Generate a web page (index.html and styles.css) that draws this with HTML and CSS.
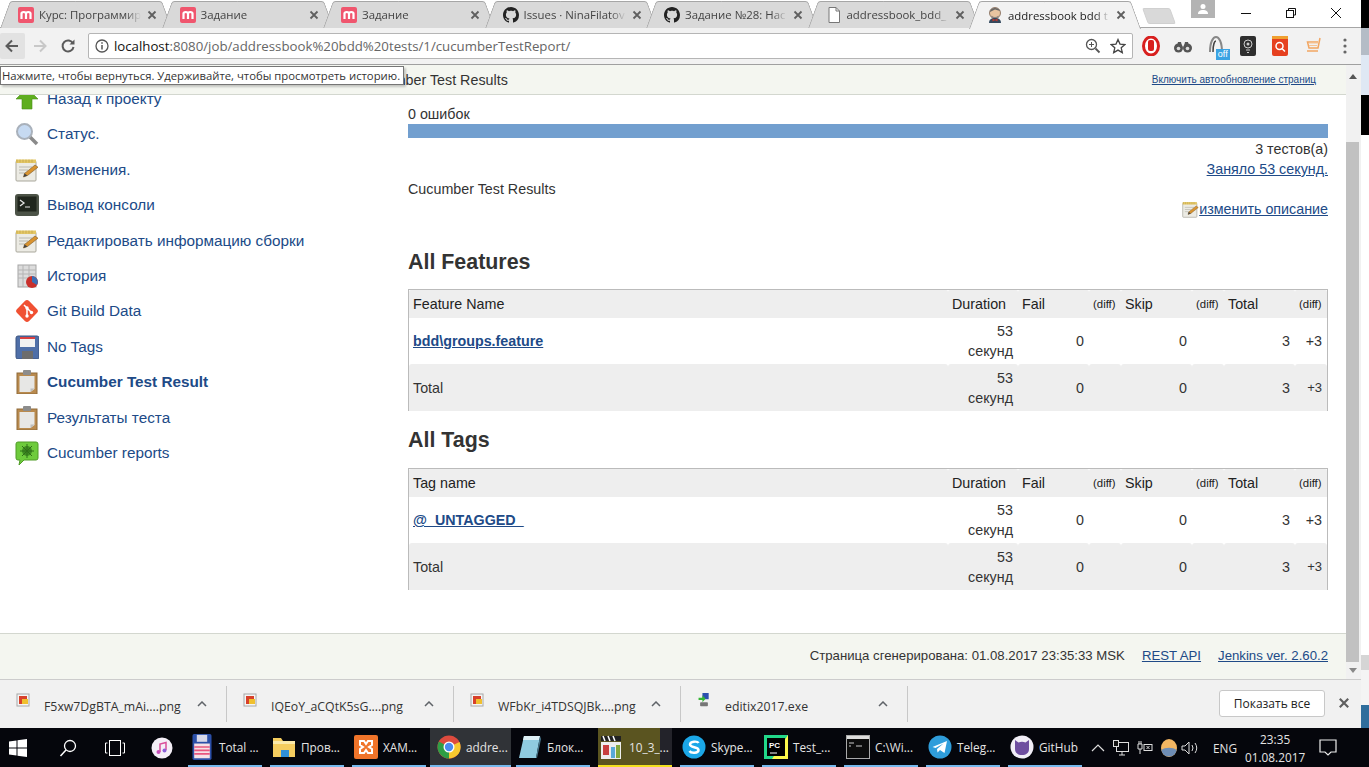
FILE: index.html
```html
<!DOCTYPE html>
<html lang="ru">
<head>
<meta charset="UTF-8" />
<title>Cucumber Test Results</title>
<link rel="stylesheet" href="styles.css">
</head>
<body>

<svg class="defs" width="0" height="0">
  <symbol id="i-moodle" viewBox="0 0 16 16">
    <rect width="16" height="16" rx="2" fill="#f0566e"/>
    <path d="M3.5 12V6.5C3.5 4.5 8 4.5 8 6.5V12M8 6.5C8 4.5 12.5 4.5 12.5 6.5V12" fill="none" stroke="#fff" stroke-width="2.2"/>
  </symbol>
  <symbol id="i-github" viewBox="0 0 16 16">
    <path fill="#222" d="M8 0C3.58 0 0 3.58 0 8c0 3.54 2.29 6.53 5.47 7.59.4.07.55-.17.55-.38 0-.19-.01-.82-.01-1.49-2.01.37-2.53-.49-2.69-.94-.09-.23-.48-.94-.82-1.13-.28-.15-.68-.52-.01-.53.63-.01 1.08.58 1.23.82.72 1.21 1.87.87 2.33.66.07-.52.28-.87.51-1.07-1.78-.2-3.64-.89-3.64-3.95 0-.87.31-1.59.82-2.15-.08-.2-.36-1.02.08-2.12 0 0 .67-.21 2.2.82.64-.18 1.32-.27 2-.27.68 0 1.36.09 2 .27 1.53-1.04 2.2-.82 2.2-.82.44 1.1.16 1.92.08 2.12.51.56.82 1.27.82 2.15 0 3.07-1.87 3.75-3.65 3.95.29.25.54.73.54 1.48 0 1.07-.01 1.93-.01 2.2 0 .21.15.46.55.38A8.013 8.013 0 0016 8c0-4.42-3.58-8-8-8z"/>
  </symbol>
  <symbol id="i-notepad" viewBox="0 0 24 24">
    <rect x="1" y="3" width="20" height="20" rx="1" fill="#ecebe4" stroke="#a9a79c"/>
    <rect x="1" y="1.500" width="20" height="3.500" fill="#e3c766"/>
    <path d="M2 1.500v3M5 1.500v3M8 1.500v3M11 1.500v3M14 1.500v3M17 1.500v3" stroke="#b99c45" stroke-width=".6"/>
    <path d="M4 9h13M4 12h9M4 15h7" stroke="#b9b9b0"/>
    <path d="M8.500 19l1-3.500L20 7l3 2.200L12.500 17.500z" fill="#d9932f" stroke="#7c5a2a" stroke-width=".6"/>
    <path d="M8.500 19l1-3.500 3 2z" fill="#444"/>
  </symbol>
  <symbol id="i-clipboard" viewBox="0 0 24 24">
    <rect x="2" y="3" width="20" height="21" fill="#b98a4e" stroke="#8f6a38"/>
    <path d="M4.5 6h15v13l-4 3h-11z" fill="#e7e7e5"/>
    <path d="M15.5 22v-3.500h4z" fill="#bdbdbb"/>
    <rect x="8" y="0" width="8" height="5" rx="1" fill="#8c8c8c"/>
  </symbol>
  <symbol id="i-file" viewBox="0 0 14 14">
    <rect x="1" y="1" width="12" height="12" fill="#f5f5f5" stroke="#a8a8a8"/>
    <rect x="3" y="3" width="8" height="8" fill="#d8402a"/>
    <rect x="6" y="6" width="6" height="5" fill="#f0c02e"/>
  </symbol>
  <symbol id="i-up" viewBox="0 0 10 6">
    <path d="M1 5l4-4 4 4" fill="none" stroke="#5f6368" stroke-width="1.500"/>
  </symbol>
  <symbol id="i-close" viewBox="0 0 10 10">
    <path d="M1.500 1.500l7 7M8.500 1.500l-7 7" stroke="#5f5f5f" stroke-width="1.800"/>
  </symbol>
</svg>

<div class="screen">
  <div class="window">

    <div class="tabbar">
      <div class="tab"><svg class="fav"><use href="#i-moodle"/></svg><span class="tab-title">Курс: Программир</span><svg class="tab-x"><use href="#i-close"/></svg></div>
      <div class="tab"><svg class="fav"><use href="#i-moodle"/></svg><span class="tab-title">Задание</span><svg class="tab-x"><use href="#i-close"/></svg></div>
      <div class="tab"><svg class="fav"><use href="#i-moodle"/></svg><span class="tab-title">Задание</span><svg class="tab-x"><use href="#i-close"/></svg></div>
      <div class="tab"><svg class="fav"><use href="#i-github"/></svg><span class="tab-title">Issues · NinaFilatov</span><svg class="tab-x"><use href="#i-close"/></svg></div>
      <div class="tab"><svg class="fav"><use href="#i-github"/></svg><span class="tab-title">Задание №28: Нас</span><svg class="tab-x"><use href="#i-close"/></svg></div>
      <div class="tab">
        <svg class="fav" viewBox="0 0 16 16"><path d="M3 .5h7l3.500 3.500v11.500H3z" fill="#fff" stroke="#777"/><path d="M10 .5v3.500h3.500" fill="none" stroke="#777"/></svg>
        <span class="tab-title">addressbook_bdd_</span><svg class="tab-x"><use href="#i-close"/></svg>
      </div>
      <div class="tab active">
        <svg class="fav" viewBox="0 0 16 16">
          <circle cx="8" cy="6" r="5.500" fill="#e8c4a0" stroke="#6b5140" stroke-width=".7"/>
          <path d="M3 5C3 0 12 -.5 13 4L8 2.500z" fill="#6a6866"/>
          <path d="M4.500 8.500q3.500 3 7 0v2q-3.500 2-7 0z" fill="#8a8480"/>
          <path d="M2 16c0-4 3-5 6-5s6 1 6 5z" fill="#34495e"/>
          <path d="M5.500 11.500l2.500 1.200 2.500-1.200v3l-2.500-1.300-2.500 1.300z" fill="#c0392b"/>
        </svg>
        <span class="tab-title">addressbook bdd t</span><svg class="tab-x"><use href="#i-close"/></svg>
      </div>
      <div class="newtab"></div>
      <div class="user-btn">
        <svg width="12" height="12" viewBox="0 0 12 12"><circle cx="6" cy="3.500" r="2.500" fill="#fff"/><path d="M1 11c0-3 2-4 5-4s5 1 5 4z" fill="#fff"/></svg>
      </div>
      <div class="win-controls">
        <svg width="12" height="12" viewBox="0 0 12 12"><path d="M1 6.500h10" stroke="#111"/></svg>
        <svg width="12" height="12" viewBox="0 0 12 12"><path d="M3.500 3V1.500h7V8H9" fill="none" stroke="#111"/><rect x="1.500" y="3.500" width="7" height="7" fill="none" stroke="#111"/></svg>
        <svg width="12" height="12" viewBox="0 0 12 12"><path d="M1 1l10 10M11 1L1 11" stroke="#111"/></svg>
      </div>
    </div>

    <div class="toolbar">
      <div class="nav-btn hover">
        <svg width="16" height="16" viewBox="0 0 16 16"><path d="M14 8H3M8 2.500L2.500 8 8 13.500" fill="none" stroke="#5a5a5a" stroke-width="2"/></svg>
      </div>
      <div class="nav-btn">
        <svg width="16" height="16" viewBox="0 0 16 16"><path d="M2 8h11M8 2.500L13.500 8 8 13.500" fill="none" stroke="#c8c8c8" stroke-width="2"/></svg>
      </div>
      <div class="nav-btn">
        <svg width="16" height="16" viewBox="0 0 16 16"><path d="M13 5.500A5.500 5.500 0 1 0 13.500 9" fill="none" stroke="#5a5a5a" stroke-width="2"/><path d="M14.500 1.500v5h-5z" fill="#5a5a5a"/></svg>
      </div>
      <div class="omnibox">
        <svg width="14" height="14" viewBox="0 0 14 14"><circle cx="7" cy="7" r="6" fill="none" stroke="#555" stroke-width="1.300"/><path d="M7 6v4.500M7 3.300v1.500" stroke="#555" stroke-width="1.500"/></svg>
        <span class="url"><b>localhost</b>:8080/job/addressbook%20bdd%20tests/1/cucumberTestReport/</span>
        <svg class="omni-zoom" width="16" height="16" viewBox="0 0 16 16"><circle cx="6.500" cy="6.500" r="5" fill="none" stroke="#555" stroke-width="1.300"/><path d="M10.500 10.500l4 4" stroke="#555" stroke-width="1.800"/><path d="M4 6.500h5M6.500 4v5" stroke="#555"/></svg>
        <svg width="16" height="16" viewBox="0 0 16 16"><path d="M8 1.500l2 4.600 4.900.5-3.700 3.200 1.100 4.800L8 12.100l-4.300 2.500 1.100-4.800L1.100 6.600 6 6.100z" fill="none" stroke="#444" stroke-width="1.300"/></svg>
      </div>
      <div class="ext-row">
        <svg width="18" height="20" viewBox="0 0 18 20"><ellipse cx="9" cy="10" rx="7.500" ry="9" fill="#fff" stroke="#d8201f" stroke-width="3"/><rect x="6" y="4" width="6" height="11" rx="2" fill="#d8201f"/></svg>
        <svg width="18" height="14" viewBox="0 0 18 14"><circle cx="4.500" cy="9" r="4.500" fill="#555"/><circle cx="13.500" cy="9" r="4.500" fill="#555"/><circle cx="4.500" cy="9.500" r="1.800" fill="#ddd"/><circle cx="13.500" cy="9.500" r="1.800" fill="#ddd"/><path d="M4 3h3l1 4h2l1-4h3l1 4H3z" fill="#555"/></svg>
        <div class="ext-off">
          <svg width="16" height="20" viewBox="0 0 16 20"><path d="M2 16C2 6 5 1 8 1s6 5 6 15" fill="none" stroke="#888" stroke-width="2"/><path d="M5 16C5 9 6.500 5 8 5" fill="none" stroke="#444" stroke-width="1.500"/></svg>
          <span class="off-badge">off</span>
        </div>
        <svg width="16" height="20" viewBox="0 0 16 20"><rect width="16" height="20" rx="2" fill="#2f2f2f"/><circle cx="8" cy="8" r="4" fill="none" stroke="#ccc"/><circle cx="8" cy="8" r="1.500" fill="#ccc"/><path d="M6 14h4M7 16.500h2" stroke="#ccc"/></svg>
        <svg width="16" height="20" viewBox="0 0 16 20"><rect width="16" height="20" rx="2" fill="#e6401f"/><rect width="16" height="3" fill="#f0a030"/><circle cx="7.500" cy="10" r="3.500" fill="none" stroke="#fff" stroke-width="1.500"/><path d="M10 12.500l3 3" stroke="#fff" stroke-width="1.500"/></svg>
        <svg width="16" height="18" viewBox="0 0 16 18"><path d="M15 1l-2 10H4L2.500 5H13" fill="none" stroke="#f2a662" stroke-width="1.500"/><path d="M4 6h9M4 8.500h8" stroke="#f6c496"/><path d="M2 14h11" stroke="#f2a662" stroke-width="1.500"/></svg>
        <svg width="4" height="16" viewBox="0 0 4 16"><circle cx="2" cy="2" r="1.600" fill="#666"/><circle cx="2" cy="8" r="1.600" fill="#666"/><circle cx="2" cy="14" r="1.600" fill="#666"/></svg>
      </div>
    </div>

    <div class="viewport">
      <div class="page">
        <div class="crumbs">
          <a class="crumb-1">Jenkins</a>
          <a class="crumb-2">addressbook bdd tests</a>
          <a class="crumb-3">#1</a>
          <a class="crumb-4">Cucumber Test Results</a>
          <a class="autorefresh">Включить автообновление страниц</a>
        </div>

        <div class="columns">
          <ul class="side">
            <li>
              <svg class="ico" viewBox="0 0 24 24"><path d="M12 1L23 12h-6v10H7V12H1z" fill="#5fae1f" stroke="#4a8f17" stroke-width=".6"/></svg>
              <a>Назад к проекту</a>
            </li>
            <li>
              <svg class="ico" viewBox="0 0 24 24"><path d="M15 15l7 7" stroke="#8a8a8a" stroke-width="3.500"/><circle cx="9.500" cy="9.500" r="7.500" fill="#c6daf2" stroke="#a9b1bb" stroke-width="2"/></svg>
              <a>Статус.</a>
            </li>
            <li><svg class="ico"><use href="#i-notepad"/></svg><a>Изменения.</a></li>
            <li>
              <svg class="ico" viewBox="0 0 24 24"><rect x="0" y="1" width="24" height="22" rx="3" fill="#4c5347"/><rect x="2.500" y="3.500" width="19" height="15" fill="#20261d"/><path d="M5 7l4 3-4 3" fill="none" stroke="#e5e5e5" stroke-width="1.300"/><path d="M10 14h5" stroke="#e5e5e5"/></svg>
              <a>Вывод консоли</a>
            </li>
            <li><svg class="ico"><use href="#i-notepad"/></svg><a>Редактировать информацию сборки</a></li>
            <li>
              <svg class="ico" viewBox="0 0 24 24"><rect x="3" y="1" width="18" height="22" fill="#dcdcdc" stroke="#a5a5a5"/><path d="M3 6h18M3 10h18M3 14h18M8 1v22M14 1v22" stroke="#b4b4b4"/><circle cx="17" cy="18" r="6" fill="#c9302c"/><path d="M17 18v-6a6 6 0 0 1 5 9z" fill="#3b6fb5"/></svg>
              <a>История</a>
            </li>
            <li>
              <svg class="ico" viewBox="0 0 24 24"><rect x="4.500" y="4.500" width="15" height="15" rx="2" transform="rotate(45 12 12)" fill="#f05133" stroke="#f05133" stroke-width="2"/><path d="M9 6l7 7M12 9v7" stroke="#fff" stroke-width="1.500"/><circle cx="12" cy="9" r="1.700" fill="#fff"/><circle cx="12" cy="17" r="1.700" fill="#fff"/><circle cx="16.500" cy="13.500" r="1.700" fill="#fff"/></svg>
              <a>Git Build Data</a>
            </li>
            <li>
              <svg class="ico" viewBox="0 0 24 24"><rect x="1" y="1" width="23" height="23" rx="2" fill="#4f6fa8" stroke="#3d5480"/><rect x="5" y="2" width="15" height="10" fill="#f2f2f2"/><rect x="5" y="2" width="15" height="2" fill="#d94040"/><rect x="7" y="16" width="11" height="8" fill="#6d6d6d"/></svg>
              <a>No Tags</a>
            </li>
            <li class="current"><svg class="ico"><use href="#i-clipboard"/></svg><a>Cucumber Test Result</a></li>
            <li><svg class="ico"><use href="#i-clipboard"/></svg><a>Результаты теста</a></li>
            <li>
              <svg class="ico" viewBox="0 0 24 24"><path d="M3 1h18q2 0 2 2v14q0 2-2 2H9l-5 5 1-5H3q-2 0-2-2V3q0-2 2-2z" fill="#6ecb3c" stroke="#4f9c26"/><circle cx="12" cy="10" r="5" fill="#3f8c22"/><path d="M12 3v14M5 10h14M7 5l10 10M17 5L7 15" stroke="#2f6e18"/></svg>
              <a>Cucumber reports</a>
            </li>
          </ul>

          <div class="main">
            <div>0 ошибок</div>
            <div class="bar"></div>
            <div class="right">3 тестов(а)</div>
            <div class="right"><a>Заняло 53 секунд.</a></div>
            <div>Cucumber Test Results</div>
            <div class="right edit">
              <svg class="ico-small"><use href="#i-notepad"/></svg><a>изменить описание</a>
            </div>

            <h2 class="first">All Features</h2>
            <table class="report">
              <colgroup><col class="c-name"><col class="c-dur"><col class="c-num"><col class="c-diff"><col class="c-num"><col class="c-diff"><col class="c-num"><col class="c-diff"></colgroup>
              <tr><th>Feature Name</th><th>Duration</th><th>Fail</th><th class="diff">(diff)</th><th>Skip</th><th class="diff">(diff)</th><th>Total</th><th class="diff">(diff)</th></tr>
              <tr><td><a class="strong">bdd\groups.feature</a></td><td class="num">53 секунд</td><td class="num">0</td><td></td><td class="num">0</td><td></td><td class="num">3</td><td class="num">+3</td></tr>
              <tr class="total"><td>Total</td><td class="num">53 секунд</td><td class="num">0</td><td></td><td class="num">0</td><td></td><td class="num">3</td><td class="num small">+3</td></tr>
            </table>

            <h2>All Tags</h2>
            <table class="report">
              <colgroup><col class="c-name"><col class="c-dur"><col class="c-num"><col class="c-diff"><col class="c-num"><col class="c-diff"><col class="c-num"><col class="c-diff"></colgroup>
              <tr><th>Tag name</th><th>Duration</th><th>Fail</th><th class="diff">(diff)</th><th>Skip</th><th class="diff">(diff)</th><th>Total</th><th class="diff">(diff)</th></tr>
              <tr><td><a class="strong">@_UNTAGGED_</a></td><td class="num">53 секунд</td><td class="num">0</td><td></td><td class="num">0</td><td></td><td class="num">3</td><td class="num">+3</td></tr>
              <tr class="total"><td>Total</td><td class="num">53 секунд</td><td class="num">0</td><td></td><td class="num">0</td><td></td><td class="num">3</td><td class="num small">+3</td></tr>
            </table>
          </div>
        </div>

        <footer class="foot">
          <span>Страница сгенерирована: 01.08.2017 23:35:33 MSK</span>
          <a>REST API</a>
          <a>Jenkins ver. 2.60.2</a>
        </footer>
      </div>

      <div class="scrollbar">
        <span class="arrow-up"></span>
        <span class="thumb"></span>
        <span class="arrow-down"></span>
      </div>
    </div>

    <div class="downloads">
      <div class="dl"><svg class="dl-ico"><use href="#i-file"/></svg><span class="dl-name">F5xw7DgBTA_mAi....png</span><svg class="dl-up"><use href="#i-up"/></svg></div>
      <div class="dl"><svg class="dl-ico"><use href="#i-file"/></svg><span class="dl-name">IQEoY_aCQtK5sG....png</span><svg class="dl-up"><use href="#i-up"/></svg></div>
      <div class="dl"><svg class="dl-ico"><use href="#i-file"/></svg><span class="dl-name">WFbKr_i4TDSQJBk....png</span><svg class="dl-up"><use href="#i-up"/></svg></div>
      <div class="dl">
        <svg class="dl-ico" viewBox="0 0 16 18"><rect x="6" y="0" width="8" height="8" fill="#2c4fb0"/><path d="M1 6h5V3l4 4.500L6 12V9H1z" fill="#35b534"/><rect x="3" y="12" width="10" height="5" rx="1" fill="#777"/></svg>
        <span class="dl-name">editix2017.exe</span><svg class="dl-up"><use href="#i-up"/></svg>
      </div>
      <button class="show-all">Показать все</button>
      <svg class="dl-close"><use href="#i-close"/></svg>
    </div>

    <div class="tooltip">Нажмите, чтобы вернуться. Удерживайте, чтобы просмотреть историю.</div>
  </div>

  <div class="strip"></div>
</div>

<div class="taskbar">
  <div class="sys">
    <svg width="18" height="18" viewBox="0 0 18 18"><path d="M0 2.500l7.500-1v7H0zM8.500 1.300L18 0v8.500H8.500zM0 9.500h7.500v7L0 15.500zM8.500 9.500H18V18l-9.500-1.300z" fill="#fff"/></svg>
  </div>
  <div class="sys">
    <svg width="18" height="18" viewBox="0 0 18 18"><circle cx="11" cy="7" r="5.500" fill="none" stroke="#fff" stroke-width="1.300"/><path d="M7 11l-5.500 6" stroke="#fff" stroke-width="1.500"/></svg>
  </div>
  <div class="sys">
    <svg width="20" height="16" viewBox="0 0 20 16"><rect x="4.500" y=".5" width="11" height="15" fill="none" stroke="#fff"/><path d="M2.500 3H.5v10h2M17.500 3h2v10h-2" fill="none" stroke="#fff"/></svg>
  </div>
  <div class="sys sys-last">
    <svg width="22" height="22" viewBox="0 0 22 22"><circle cx="11" cy="11" r="10.500" fill="#f4eef7"/><path d="M9 15V7l6-1.500V13" fill="none" stroke="#d94f9a" stroke-width="1.500"/><circle cx="7.500" cy="15" r="2" fill="#c84fbb"/><circle cx="13.500" cy="13.500" r="2" fill="#8a5fd8"/></svg>
  </div>

  <div class="task">
    <svg class="task-ico" viewBox="0 0 22 30"><rect width="22" height="30" rx="2" fill="#2b4fa8"/><rect x="5" y="1" width="12" height="8" fill="#d8d8e8"/><rect x="2" y="11" width="18" height="17" fill="#f6e0e6"/><path d="M2 15h18M2 19h18M2 23h18" stroke="#e8557f" stroke-width="2"/></svg>
    <span>Total ...</span>
  </div>
  <div class="task">
    <svg class="task-ico" viewBox="0 0 24 24"><path d="M1 3h8l2 3h12v16H1z" fill="#f5cd5f"/><rect x="1" y="6" width="22" height="3" fill="#fbe9a8"/><rect x="9" y="15" width="8" height="7" fill="#2f8fd8"/></svg>
    <span>Пров...</span>
  </div>
  <div class="task">
    <svg class="task-ico" viewBox="0 0 24 24"><rect width="24" height="24" rx="2" fill="#f0742a"/><path d="M6 6h4l2 3 2-3h4v4l-3 2 3 2v4h-4l-2-3-2 3H6v-4l3-2-3-2z" fill="none" stroke="#fff" stroke-width="2"/></svg>
    <span>XAM...</span>
  </div>
  <div class="task active">
    <svg class="task-ico" viewBox="0 0 24 24"><circle cx="12" cy="12" r="11.500" fill="#dd4b3e"/><path d="M12 12L22.500 7A11.500 11.500 0 0 1 12 23.500z" fill="#f7c92e"/><path d="M12 12L1.900 6.500A11.500 11.500 0 0 0 12 23.500z" fill="#2f9e45"/><circle cx="12" cy="12" r="5.500" fill="#fff"/><circle cx="12" cy="12" r="4.200" fill="#4a8bf0"/></svg>
    <span>addre...</span>
  </div>
  <div class="task">
    <svg class="task-ico" viewBox="0 0 24 26"><path d="M6 2h16l-4 22H1z" fill="#8fcbe0"/><path d="M6 2h16l-1 4H5z" fill="#dff1f7"/><path d="M18 24l4-22 1 3-4 19z" fill="#47768c"/></svg>
    <span>Блок...</span>
  </div>
  <div class="task video">
    <svg class="task-ico" viewBox="0 0 24 26"><rect x="1" y="2" width="20" height="5" fill="#222"/><path d="M3 2l2 5M8 2l2 5M13 2l2 5" stroke="#fff" stroke-width="1.500"/><rect x="1" y="8" width="20" height="17" fill="#eee"/><rect x="3" y="11" width="6" height="10" fill="#c83f3f"/><rect x="11" y="13" width="4" height="11" fill="#5aa9d8"/><rect x="16" y="11" width="4" height="13" fill="#85a83c"/></svg>
    <span>10_3_...</span>
  </div>
  <div class="task">
    <svg class="task-ico" viewBox="0 0 24 24"><circle cx="12" cy="12" r="11.500" fill="#1ba7e8"/><path d="M16.500 8C15.500 6 8 6 8 9.500s8.500 2 8.500 5.500S9 18.500 7.500 16" fill="none" stroke="#fff" stroke-width="2.500"/></svg>
    <span>Skype...</span>
  </div>
  <div class="task">
    <svg class="task-ico" viewBox="0 0 24 24"><rect width="24" height="24" fill="#21d789"/><path d="M24 0v24H8z" fill="#fcf84a"/><rect x="3" y="3" width="18" height="18" fill="#000"/><path d="M6 18h7" stroke="#fff"/><text x="5" y="13" class="pc-text">PC</text></svg>
    <span>Test_...</span>
  </div>
  <div class="task">
    <svg class="task-ico" viewBox="0 0 24 24"><rect x=".5" y=".5" width="23" height="23" fill="#0c0c0c" stroke="#aaa"/><rect x="1" y="1" width="22" height="3" fill="#ddd"/><path d="M3 8h5M3 11h2M10 11h6" stroke="#ccc"/></svg>
    <span>C:\Wi...</span>
  </div>
  <div class="task">
    <svg class="task-ico" viewBox="0 0 24 24"><circle cx="12" cy="12" r="11.500" fill="#2f9ddb"/><path d="M4.500 12L19 6l-2.500 12-4.500-3-2.500 2.500L9 14l6.500-5.500L7.500 13z" fill="#fff"/></svg>
    <span>Teleg...</span>
  </div>
  <div class="task">
    <svg class="task-ico" viewBox="0 0 24 24"><circle cx="12" cy="12" r="11.500" fill="#f1eef7"/><path d="M5 5l3.500 2.500a9 9 0 0 1 7 0L19 5v9c0 4-3 6-7 6s-7-2-7-6z" fill="#6e4ea0"/></svg>
    <span>GitHub</span>
  </div>

  <div class="tray">
    <svg width="14" height="8" viewBox="0 0 14 8"><path d="M1 7l6-6 6 6" fill="none" stroke="#ddd" stroke-width="1.200"/></svg>
    <svg width="16" height="16" viewBox="0 0 16 16"><rect x="3.500" y="2.500" width="12" height="9" fill="none" stroke="#ddd"/><path d="M9 12v3M6 15h6" stroke="#ddd"/><rect x=".5" y=".5" width="5" height="6" fill="#111" stroke="#ddd"/></svg>
    <svg width="16" height="14" viewBox="0 0 16 14"><path d="M1 3h4v5H1zM2 3V0M4 3V0M3 8v5" fill="none" stroke="#ddd"/><rect x="7" y="3.500" width="8" height="6" fill="none" stroke="#ddd"/><path d="M9.500 5l3 3M12.500 5l-3 3" stroke="#ddd"/></svg>
    <svg width="16" height="18" viewBox="0 0 16 18"><ellipse cx="8" cy="9" rx="8" ry="9" fill="#f3b662"/><path d="M.3 11C4 8 12 8 15.700 11A8 9 0 0 1 .3 11z" fill="#6e8db5"/></svg>
    <svg class="tray-sound" width="18" height="14" viewBox="0 0 18 14"><path d="M1 5h3l4-4v12l-4-4H1z" fill="none" stroke="#ddd"/><path d="M11 4q2 3 0 6M14 2q3.500 5 0 10" fill="none" stroke="#ddd"/></svg>
    <span class="lang">ENG</span>
    <div class="clock"><span>23:35</span><span>01.08.2017</span></div>
    <svg class="notify" width="18" height="18" viewBox="0 0 18 18"><path d="M1 1h16v12h-5l-3 3-3-3H1z" fill="none" stroke="#eee" stroke-width="1.200"/></svg>
  </div>
</div>

</body>
</html>
```

FILE: styles.css
```css
* {
  box-sizing: border-box;
}
html, body {
  margin: 0;
  height: 767px;
  overflow: hidden;
}
body {
  font-family: "Liberation Sans", Arial, sans-serif;
  font-size: 14.3px;
  color: #333;
  background: #000;
}
.defs {
  position: absolute;
}
a {
  color: #204a87;
  text-decoration: underline;
}

.screen {
  display: flex;
  height: 728px;
}
.window {
  position: relative;
  width: 1361px;
  display: flex;
  flex-direction: column;
  background: #fff;
}
.strip {
  flex: 1;
  background: linear-gradient(#000 0 28px, #b4bcc6 28px 55px, #dfe8f4 55px 95px, #000 95px 135px, #fff 135px 655px, #d5d5d5 655px 670px, #f4f4f4 670px 705px, #2f6d9c 705px);
}

/* Tabs */
.tabbar {
  height: 28px;
  flex: none;
  display: flex;
  background: #fff;
  border-bottom: 1px solid #a6a6a6;
  font-family: "Open Sans", sans-serif;
  font-size: 11.4px;
}
.tab {
  position: relative;
  isolation: isolate;
  width: 172px;
  height: 27px;
  margin-top: 1px;
  margin-right: -10.5px;
  padding: 0 15px 0 18px;
  display: flex;
  align-items: center;
  flex: none;
  color: #444;
}
.tab::before, .tab::after {
  content: "";
  position: absolute;
  z-index: -1;
  top: 0;
  bottom: 0;
  width: 50%;
  background: #d9d9d9;
  border-top: 1px solid #a6a6a6;
}
.tab::before {
  left: 5px;
  border-left: 1px solid #a6a6a6;
  transform: skewX(-20deg);
  border-top-left-radius: 3px;
}
.tab::after {
  right: 5px;
  border-right: 1px solid #a6a6a6;
  transform: skewX(20deg);
  border-top-right-radius: 3px;
}
.tab.active {
  z-index: 2;
  height: 28px;
  color: #222;
}
.tab.active::before, .tab.active::after {
  background: #f2f2f2;
}
.fav {
  width: 16px;
  height: 16px;
  flex: none;
  margin-right: 5px;
}
.tab-title {
  flex: 1;
  overflow: hidden;
  white-space: nowrap;
  -webkit-mask-image: linear-gradient(to right, #000 85%, transparent);
  mask-image: linear-gradient(to right, #000 85%, transparent);
}
.tab-x {
  width: 10px;
  height: 10px;
  margin-left: 6px;
  flex: none;
}
.newtab {
  width: 28px;
  height: 16px;
  margin: 8px 0 0 14px;
  flex: none;
  background: #d9d9d9;
  border: 1px solid #d0d0d0;
  border-radius: 2px;
  transform: skewX(20deg);
}
.user-btn {
  width: 24px;
  height: 18px;
  margin-left: 18px;
  flex: none;
  display: flex;
  align-items: center;
  justify-content: center;
  background: #b3b3b3;
}
.win-controls {
  margin-left: 25px;
  height: 26px;
  display: flex;
  align-items: center;
  gap: 33px;
}

/* Toolbar */
.toolbar {
  height: 37px;
  flex: none;
  display: flex;
  align-items: center;
  padding: 0 0 1px 0;
  background: #f2f2f2;
  border-bottom: 1px solid #a0a0a0;
}
.nav-btn {
  width: 25px;
  height: 26px;
  margin-right: 3px;
  display: flex;
  align-items: center;
  justify-content: center;
  border-radius: 2px;
}
.nav-btn.hover {
  background: #e2e2e2;
  margin-right: 3px;
}
.omnibox {
  width: 1046px;
  height: 26px;
  margin-left: 4px;
  padding: 0 6px;
  display: flex;
  align-items: center;
  gap: 5px;
  background: #fff;
  border: 1px solid #b5b5b5;
  border-radius: 2px;
}
.url {
  flex: 1;
  font-family: "Open Sans", sans-serif;
  font-size: 13.25px;
  color: #666;
  white-space: nowrap;
}
.url b {
  font-weight: normal;
  color: #111;
}
.omni-zoom {
  margin-right: 4px;
}
.ext-row {
  display: grid;
  grid-template-columns: repeat(7, 32.3px);
  justify-items: center;
  align-items: center;
  padding-left: 2px;
}
.ext-off {
  position: relative;
  display: flex;
}
.off-badge {
  position: absolute;
  right: -6px;
  bottom: -4px;
  padding: 0 2px;
  font-size: 9px;
  line-height: 11px;
  color: #fff;
  background: #3aa3e3;
}

/* Jenkins page */
.viewport {
  flex: 1;
  min-height: 0;
  display: flex;
}
.page {
  flex: 1;
  min-width: 0;
  display: flex;
  flex-direction: column;
}
.crumbs {
  height: 30px;
  flex: none;
  display: flex;
  align-items: center;
  padding: 0 30px 0 15px;
  background: #f4f6f0;
  border-bottom: 1px solid #d3d7cf;
  white-space: nowrap;
}
.crumbs a {
  color: #333;
  text-decoration: none;
}
.crumb-2 {
  margin-left: 44px;
}
.crumb-3 {
  margin-left: 47px;
}
.crumb-4 {
  margin-left: 46px;
}
.crumbs .autorefresh {
  margin-left: auto;
  font-size: 10px;
  color: #204a87;
  text-decoration: underline;
}
.columns {
  flex: 1;
  min-height: 0;
  display: flex;
  overflow: hidden;
}
.side {
  width: 408px;
  flex: none;
  list-style: none;
  margin: -13.7px 0 0;
  padding: 0 0 0 15px;
  font-size: 15.3px;
}
.side li {
  height: 35.4px;
  display: flex;
  align-items: center;
  gap: 8px;
}
.side a {
  text-decoration: none;
}
.side .current a {
  font-weight: bold;
}
.ico {
  width: 24px;
  height: 24px;
  flex: none;
}
.main {
  flex: 1;
  min-width: 0;
  padding: 9px 18px 0 0;
  line-height: 20px;
}
.bar {
  height: 14px;
  margin-bottom: 1px;
  background: #729fcf;
}
.right {
  text-align: right;
}
.edit {
  display: flex;
  justify-content: flex-end;
  align-items: center;
}
.ico-small {
  width: 17px;
  height: 17px;
}
h2 {
  margin: 0;
  padding-top: 16px;
  height: 57px;
  font-size: 21.4px;
  line-height: 26px;
  color: #333;
}
h2.first {
  padding-top: 30px;
  height: 70px;
}
.report {
  width: 100%;
  table-layout: fixed;
  border-collapse: separate;
  border-spacing: 0;
  border: 1px solid #bbb;
  border-width: 1px 1px 0 1px;
}
.c-name { width: 539px; }
.c-dur { width: 70px; }
.c-num { width: 71px; }
.c-diff { width: 32px; }
.report th {
  height: 28px;
  padding: 0 4px;
  text-align: left;
  font-weight: normal;
  color: #222;
  background: #eee;
  border-radius: 2px 2px 0 0;
}
.report th.diff {
  font-size: 11.4px;
}
.report td {
  height: 46px;
  padding: 0 5px 0 4px;
}
.report .total td {
  height: 47px;
  background: #eee;
  border-radius: 3px 3px 0 0;
}
.report .num {
  text-align: right;
}
.report .small {
  font-size: 13px;
}
.strong {
  font-weight: bold;
}
.foot {
  height: 46px;
  flex: none;
  display: flex;
  align-items: center;
  justify-content: flex-end;
  gap: 17px;
  padding: 0 18px 2px 0;
  font-size: 13.2px;
  background: #f4f6f0;
  border-top: 1px solid #d3d7cf;
}
.scrollbar {
  width: 15px;
  flex: none;
  position: relative;
  background: #f1f1f1;
}
.thumb {
  position: absolute;
  left: 0;
  top: 77px;
  width: 13px;
  height: 520px;
  background: #c1c1c1;
}
.arrow-up, .arrow-down {
  position: absolute;
  left: 3px;
  border: 4px solid transparent;
}
.arrow-up {
  top: 5px;
  border-bottom: 5px solid #555;
}
.arrow-down {
  bottom: 2px;
  border-top: 5px solid #888;
}

/* Downloads */
.downloads {
  height: 49px;
  flex: none;
  display: flex;
  align-items: flex-start;
  padding-top: 6px;
  background: #f1f1f1;
  border-top: 1px solid #ccc;
  font-family: "Open Sans", sans-serif;
  font-size: 12.3px;
  color: #333;
}
.dl {
  width: 227px;
  height: 36px;
  padding-left: 16px;
  display: flex;
  align-items: center;
  flex: none;
  border-right: 1px solid #c8c8c8;
}
.dl-ico {
  width: 14px;
  height: 14px;
  margin: -8px 14px 0 0;
  flex: none;
}
.dl-name {
  width: 140px;
  white-space: nowrap;
  margin-top: 5px;
}
.dl-up {
  width: 10px;
  height: 6px;
  margin: 0 0 0 13px;
}
.show-all {
  width: 106px;
  height: 27px;
  margin: 4px 0 0 auto;
  font-family: inherit;
  font-size: 12px;
  color: #222;
  background: #fff;
  border: 1px solid #c8c8c8;
  border-radius: 3px;
}
.dl-close {
  width: 12px;
  height: 12px;
  margin: 11px 11px 0 13px;
}

.tooltip {
  position: absolute;
  left: 0;
  top: 66px;
  width: 404px;
  height: 19px;
  padding-left: 1px;
  font-family: "Open Sans", sans-serif;
  font-size: 11.3px;
  line-height: 17px;
  white-space: nowrap;
  color: #333;
  background: #fff;
  border: 1px solid #767676;
  box-shadow: 2px 2px 2px rgba(0,0,0,0.2);
}

/* Taskbar */
.taskbar {
  height: 39px;
  display: flex;
  align-items: stretch;
  background: #05060c;
  font-family: "Open Sans", sans-serif;
  font-size: 11.8px;
  color: #e4e4e4;
}
.sys {
  width: 47px;
  flex: none;
  display: flex;
  align-items: center;
  justify-content: center;
}
.sys:first-child {
  width: 36px;
  margin-right: 8px;
}
.sys-last {
  width: 48px;
  margin-right: 2px;
}
.task {
  width: 74px;
  margin-right: 8px;
  padding: 0 0 0 2px;
  flex: none;
  display: flex;
  align-items: center;
  gap: 5px;
  white-space: nowrap;
  border-bottom: 2px solid #76b9ed;
}
.task.active {
  width: 81px;
  margin: 0 5px 0 -4px;
  padding-left: 7px;
  background: #303337;
}
.task.video {
  background: linear-gradient(to right, #5a5420 0 62px, #23232a 62px);
  border-bottom-color: #f2e01f;
}
.task-ico {
  width: 24px;
  height: 26px;
  flex: none;
}
.pc-text {
  font-family: "Liberation Sans", sans-serif;
  font-size: 8px;
  font-weight: bold;
  fill: #fff;
}
.tray {
  flex: 1;
  display: flex;
  align-items: center;
  padding-left: 1px;
  gap: 8px;
}
.tray-sound {
  margin-left: -4px;
}
.lang {
  margin-left: 6px;
}
.clock {
  display: flex;
  flex-direction: column;
  align-items: center;
  line-height: 18px;
}
.notify {
  margin-left: auto;
  margin-right: 32px;
}
```
